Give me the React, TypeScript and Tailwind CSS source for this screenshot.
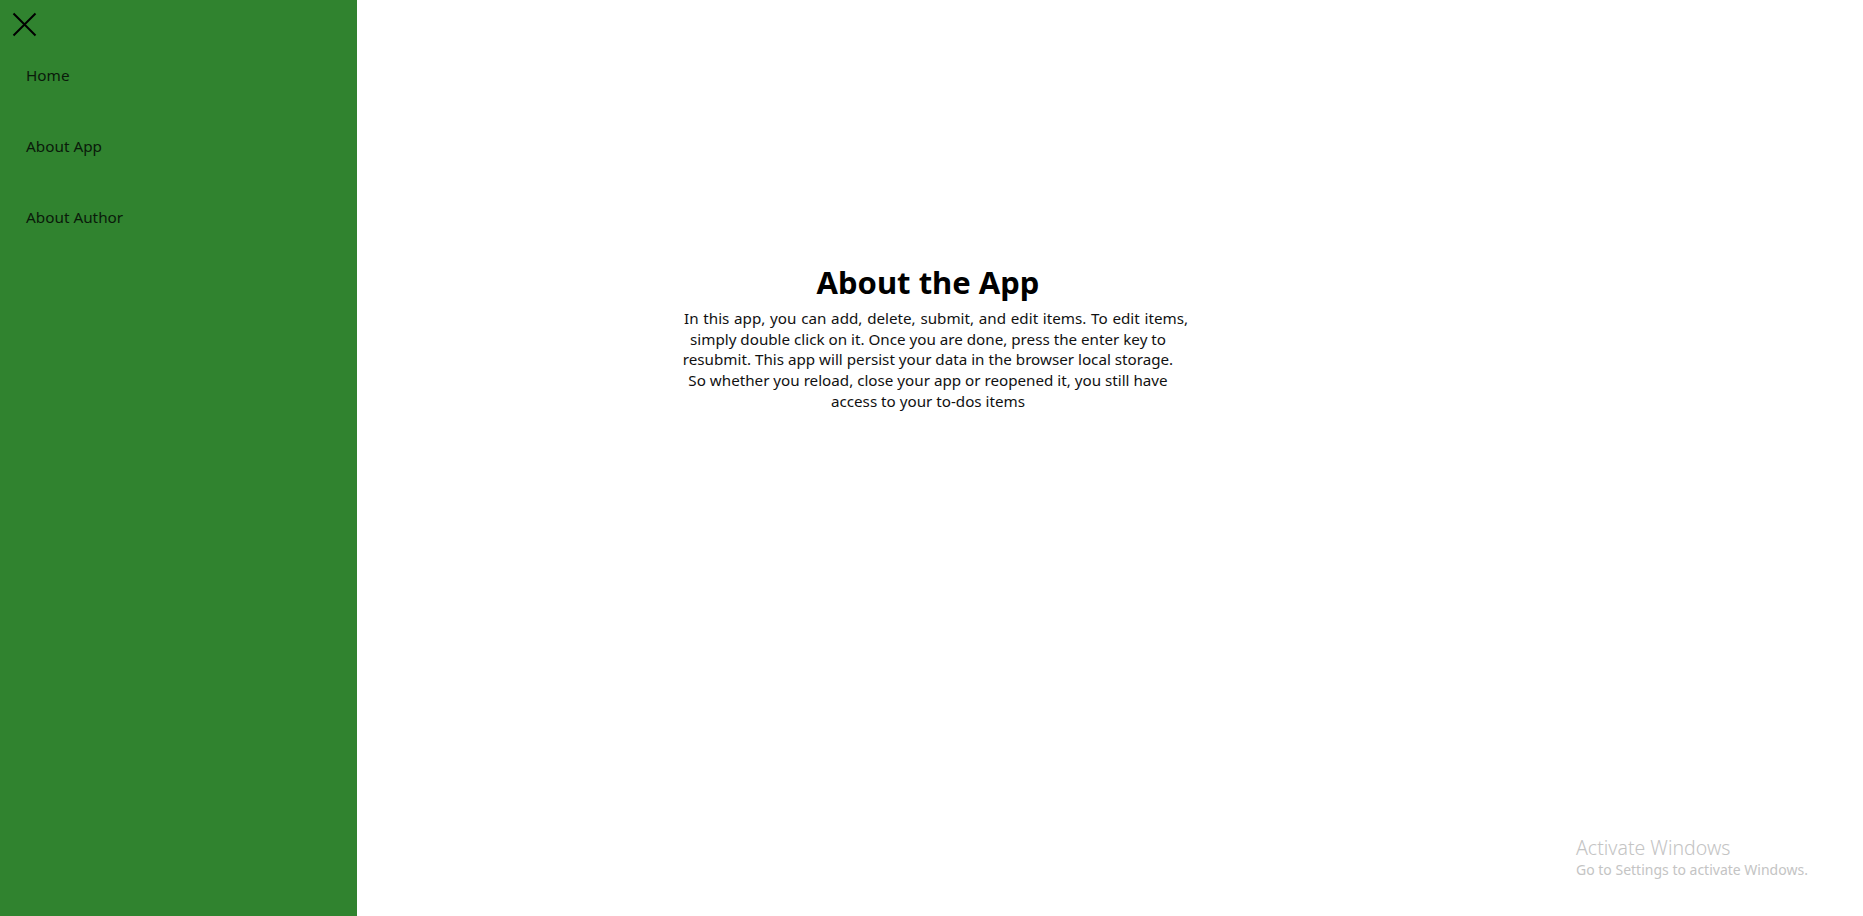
import React from "react";

export default function App() {
  return (
    <div
      className="relative flex h-[916px] w-full bg-white text-black"
      style={{ fontFamily: '"Noto Sans", "Open Sans", sans-serif' }}
    >
      <aside className="flex h-full w-[357px] shrink-0 flex-col bg-[#30832f]">
        <button className="ml-[12px] mt-[12px] flex h-[25px] w-[25px] items-center justify-center">
          <svg width="25" height="25" viewBox="0 0 25 25" fill="none">
            <path d="M1.5 1.5 L23.5 23.5 M23.5 1.5 L1.5 23.5" stroke="#000" strokeWidth="2" />
          </svg>
        </button>
        <nav className="mt-[28px] flex flex-col gap-[50px] pl-[26px] text-[15.3px] leading-[21px] text-[#0a1a0a]">
          <a>Home</a>
          <a>About App</a>
          <a>About Author</a>
        </nav>
      </aside>
      <main className="flex flex-1 flex-col items-center pt-[262px] pr-[364px]">
        <div className="flex w-[540px] flex-col items-center text-center">
          <h1 className="text-[31px] font-bold leading-[40px]">About the App</h1>
          <p className="mt-[6px] text-[15.2px] leading-[20.7px] text-[#111]">
            <span className="ml-[16px] [word-spacing:0.8px]">In this app, you can add, delete, submit, and edit items. To edit items,</span>
            <br />
            simply double click on it. Once you are done, press the enter key to
            <br />
            resubmit. This app will persist your data in the browser local storage.
            <br />
            So whether you reload, close your app or reopened it, you still have
            <br />
            access to your to-dos items
          </p>
        </div>
      </main>
      <div className="absolute left-[1576px] top-[836px] text-[#c4c4c4]">
        <div className="text-[19.5px] font-light leading-[24px]">Activate Windows</div>
        <div className="text-[14px] leading-[20px]">Go to Settings to activate Windows.</div>
      </div>
    </div>
  );
}
